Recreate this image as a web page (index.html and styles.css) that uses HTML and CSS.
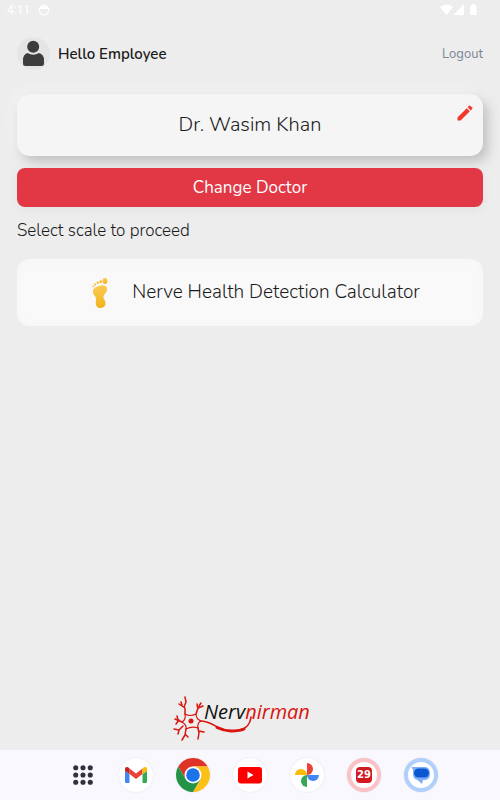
FILE: index.html
```html
<!DOCTYPE html>
<html lang="en">
<head>
<meta charset="utf-8">
<meta name="viewport" content="width=device-width, initial-scale=1">
<title>Nervnirman</title>
<link rel="stylesheet" href="styles.css">
</head>
<body>
<div class="status">
  <span class="status-left">
    <span>4:11</span>
    <svg width="12" height="12" viewBox="0 0 12 12"><circle cx="6" cy="6" r="4.800" fill="none" stroke="#fff" stroke-width="1.200"/><path d="M2 2.500H10V5H2Z" fill="#fff"/></svg>
  </span>
  <svg width="38" height="12" viewBox="0 0 38 12" fill="#fff"><path d="M0 3Q6.500-2 13 3L6.500 11Z"/><path d="M24 0V11H13.500Z"/><path d="M30 1.500h2V0h3v1.500h1.500V11H30Z"/></svg>
</div>
<main class="page">
  <header class="header">
    <svg class="avatar" viewBox="0 0 33 33"><circle cx="16.500" cy="16.500" r="16.500" fill="#e5e5e5"/><g fill="#3d3d3d"><circle cx="16.200" cy="9.800" r="6"/><path d="M10.500 16Q16.300 19.500 22 16Q27 17.500 27 23V26.500Q27 29 24.500 29H8.500Q6 29 6 26.500V23Q6 17.500 10.500 16Z"/></g></svg>
    <h1 class="hello">Hello Employee</h1>
    <a class="logout" href="#">Logout</a>
  </header>
  <section class="doctor">
    <h2 class="doctor-name">Dr. Wasim Khan</h2>
    <button class="edit" type="button" aria-label="Edit doctor">
      <svg width="20" height="20" viewBox="0 0 24 24" fill="#f4372c"><path d="M3 17.250V21h3.750L17.810 9.940l-3.750-3.750L3 17.250ZM20.710 7.040a1 1 0 0 0 0-1.410l-2.340-2.340a1 1 0 0 0-1.410 0l-1.830 1.830 3.750 3.750 1.830-1.830Z"/></svg>
    </button>
  </section>
  <button class="change" type="button">Change Doctor</button>
  <p class="prompt">Select scale to proceed</p>
  <button class="scale" type="button">
    <svg width="16" height="32" viewBox="0 0 16 32"><defs><linearGradient id="foot" x2="0" y2="1"><stop stop-color="#fccb50"/><stop offset="1" stop-color="#f3b21f"/></linearGradient></defs><g fill="url(#foot)"><path d="M7 9C12 7 15.500 9 15 13C14.500 17 11 17 11.500 20.500C12 23 13.800 24 13.500 27C13 32 5 32.500 4 28C3.200 25 5 22 3 19C-.5 15 0 11 7 9Z"/><ellipse cx="13" cy="4" rx="2.400" ry="2.900"/><ellipse cx="8.800" cy="4.600" rx="1.300" ry="1.700"/><ellipse cx="5.800" cy="5.600" rx="1.100" ry="1.400"/><circle cx="3.200" cy="7.400" r="1.100"/><circle cx="1.300" cy="9.400" r=".9"/></g></svg>
    <span>Nerve Health Detection Calculator</span>
  </button>
  <footer class="brand">
    <svg width="140" height="46" viewBox="0 0 140 46" role="img" aria-label="Nervnirman">
      <g fill="none" stroke="#d9150f" stroke-linecap="round" stroke-linejoin="round">
        <path stroke-width="1.200" d="M11 18Q16 21 22 18Q22 23 27 25Q23 27 24 32Q18 30 12 33Q13 29 8 26Q12 24 11 18Z"/>
        <path stroke-width="1.500" d="M11 18L11 12L5 8M10 11L12 6L11 1M8 9L7 6M22 18L24 12L29 10M24 13L23 8M25 10L27 7M8 26L1 23M5 24L2 28M4 24L3 20M9 30L5 34L0 33M5 34L4 38M12 33L11 39L8 44M11 38L14 41M24 32L25 37L24 43M25 35L30 36"/>
        <path stroke-width="1.700" d="M26 25C40 25 43 35 58 35C72 35 76 29 77 21"/>
        <path stroke-width="3" d="M43 31.500Q49 34.500 57 35Q66 35 70 33"/>
      </g>
      <circle cx="17" cy="25" r="2.500" fill="#d9150f"/>
      <text class="brand-text" x="30" y="23">Nerv<tspan class="brand-red">nirman</tspan></text>
    </svg>
  </footer>
</main>
<nav class="dock" aria-label="Apps">
  <a class="apps" href="#" aria-label="All apps"><svg width="20" height="20" viewBox="0 0 22 22" fill="#30313c"><circle cx="3" cy="3" r="2.800"/><circle cx="11" cy="3" r="2.800"/><circle cx="19" cy="3" r="2.800"/><circle cx="3" cy="11" r="2.800"/><circle cx="11" cy="11" r="2.800"/><circle cx="19" cy="11" r="2.800"/><circle cx="3" cy="19" r="2.800"/><circle cx="11" cy="19" r="2.800"/><circle cx="19" cy="19" r="2.800"/></svg></a>
  <a class="app" href="#" aria-label="Gmail"><svg viewBox="0 0 34 34"><path fill="#4285f4" d="M6 13L10.500 16V25H7.500Q6 25 6 23.500Z"/><path fill="#34a853" d="M28 13L23.500 16V25H26.500Q28 25 28 23.500Z"/><path fill="#ea4335" d="M10.500 10.500L17 15.500L23.500 10.500V16L17 21L10.500 16Z"/><path fill="#c5221f" d="M6 11.500C6 8.500 8.500 8.500 10.500 10.500V16L6 13Z"/><path fill="#fbbc04" d="M28 11.500C28 8.500 25.500 8.500 23.500 10.500V16L28 13Z"/></svg></a>
  <a class="app" href="#" aria-label="Chrome"><svg viewBox="0 0 34 34"><path fill="#df3327" d="M2.300 8.500A17 17 0 0 1 31.700 8.500H17L9.600 21.200Z"/><path fill="#fcc016" d="M31.700 8.500A17 17 0 0 1 17 34L24.400 21.200L17 8.500Z"/><path fill="#239447" d="M17 34A17 17 0 0 1 2.300 8.500L9.600 21.200Q17 27 24.400 21.200Z"/><circle cx="17" cy="17" r="8.500" fill="#fff"/><circle cx="17" cy="17" r="6.800" fill="#1a73e8"/></svg></a>
  <a class="app" href="#" aria-label="YouTube"><svg viewBox="0 0 34 34"><rect x="5" y="9" width="24" height="16.500" rx="3" fill="#f00"/><path d="M14.500 13.500V20.500L20.500 17Z" fill="#fff"/></svg></a>
  <a class="app" href="#" aria-label="Photos"><svg viewBox="0 0 34 34"><path fill="#ea4335" d="M17 5A6 6 0 0 1 17 17Z"/><path fill="#4285f4" d="M29 17A6 6 0 0 1 17 17Z"/><path fill="#34a853" d="M17 29A6 6 0 0 1 17 17Z"/><path fill="#fbbc04" d="M5 17A6 6 0 0 1 17 17Z"/></svg></a>
  <a class="app app-red" href="#" aria-label="Calendar"><span class="day">29</span></a>
  <a class="app app-blue" href="#" aria-label="Messages"><svg viewBox="0 0 26 26"><path fill="#7eacf8" d="M3.500 5H17Q22 5 22 12Q22 18 16 18H15L14 22L9.500 18Q5 17 5 12V8Z"/><rect x="6" y="6.500" width="15" height="9" rx="4.500" fill="#0b57d0"/></svg></a>
</nav>
</body>
</html>
```
FILE: styles.css
```css
* { box-sizing: border-box; }

body {
  margin: 0;
  min-height: 100vh;
  display: flex;
  flex-direction: column;
  background: #ededed;
  color: #1b1b1b;
  font-family: Nunito, "Open Sans", "Noto Sans", sans-serif;
}

button {
  border: 0;
  color: inherit;
  font-family: inherit;
  cursor: pointer;
}

a { text-decoration: none; }
svg { display: block; flex: none; }

.status {
  height: 20px;
  padding: 0 22px 0 7px;
  display: flex;
  align-items: center;
  justify-content: space-between;
  color: #fff;
  font: 12px Roboto, sans-serif;
}

.status-left {
  display: flex;
  align-items: center;
  gap: 8px;
}

.page {
  flex: 1;
  display: flex;
  flex-direction: column;
  padding: 17px 17px 8px;
}

.header {
  display: flex;
  align-items: center;
  gap: 8px;
}

.avatar {
  width: 33px;
  height: 33px;
}

.hello {
  margin: 0;
  font-size: 15px;
  font-weight: 600;
}

.logout {
  margin-left: auto;
  color: #7c8796;
  font-size: 13px;
}

.doctor {
  position: relative;
  margin-top: 24px;
  padding: 16px;
  border-radius: 13px;
  background: #f5f5f5;
  box-shadow: 5px 6px 12px #c1c1c1, -5px -5px 12px #f2f2f2;
  text-align: center;
}

.doctor-name {
  margin: 0;
  font-size: 20px;
  line-height: 30px;
  font-weight: 300;
}

.edit {
  position: absolute;
  top: 9px;
  right: 8px;
  padding: 0;
  background: none;
}

.change {
  position: relative;
  margin-top: 12px;
  padding: 8px;
  border-radius: 8px;
  background: #e23744;
  box-shadow: 0 2px 10px #e3e1e0;
  color: #fff;
  font-size: 17px;
  line-height: 23px;
}

.prompt {
  margin: 12px 0 16px;
  font-size: 17px;
  line-height: 24px;
  font-weight: 300;
}

.scale {
  display: flex;
  align-items: center;
  justify-content: center;
  gap: 24px;
  padding: 16px 16px 16px 28px;
  border-radius: 13px;
  background: #f9f9f9;
  box-shadow: inset 0 0 8px #f5f5f5;
  font-size: 19px;
  line-height: 35px;
  font-weight: 300;
}

.brand {
  margin-top: auto;
  display: flex;
  justify-content: center;
  padding-right: 12px;
}

.brand svg { overflow: visible; }

.brand-text {
  fill: #111;
  font: italic 20px "Open Sans", sans-serif;
}

.brand-red { fill: #d9150f; }

.dock {
  height: 50px;
  display: flex;
  align-items: center;
  justify-content: center;
  gap: 23px;
  padding-left: 8px;
  background: #faf8ff;
}

.apps {
  width: 26px;
  display: flex;
  justify-content: center;
}

.app {
  width: 34px;
  height: 34px;
  display: flex;
  align-items: center;
  justify-content: center;
  border-radius: 50%;
  background: #fff;
  box-shadow: 0 0 2px #dcdce4;
}

.app svg { width: 100%; }

.app-red { border: 4px solid #fbc1c4; }
.app-blue { border: 4px solid #b0d0fb; }

.day {
  width: 16px;
  border-radius: 4px;
  background: #d01a20;
  color: #fff;
  font: bold 10px/16px "DejaVu Sans", sans-serif;
  text-align: center;
}
```
